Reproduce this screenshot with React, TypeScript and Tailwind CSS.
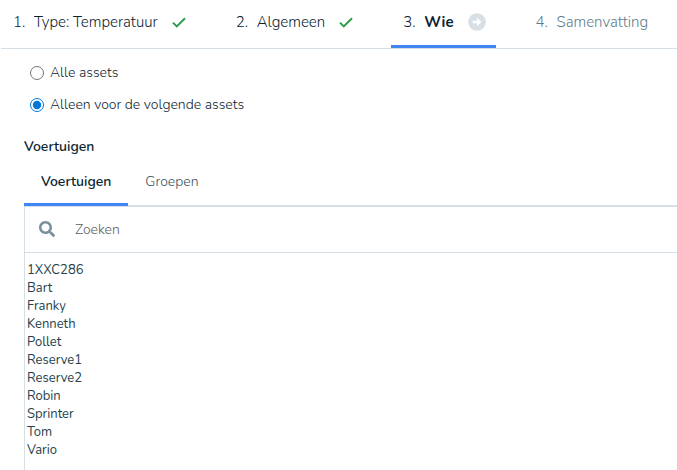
import React, { useState } from 'react';
import { clsx } from 'clsx';

const CheckIcon = () => (
  <svg viewBox="0 0 14 11" className="ml-[14px] h-[11px] w-[14px]" fill="none" aria-hidden="true">
    <path d="M1 5.6 4.8 9.4 13 1.2" stroke="#2a9d4a" strokeWidth="2" />
  </svg>
);

const CurrentIcon = () => (
  <svg viewBox="0 0 18 18" className="mb-[2px] ml-[14px] h-[18px] w-[18px]" aria-hidden="true">
    <circle cx="9" cy="9" r="8.8" fill="#d8e0e6" />
    <path d="M4.8 7.7h4.2V4.700L13.500 9l-4.500 4.300v-3H4.8z" fill="#fff" />
  </svg>
);

const SearchIcon = () => (
  <svg viewBox="0 0 512 512" className="mb-[2px] h-4 w-4" fill="#78909c" aria-hidden="true">
    <path d="M505 442.7 405.3 343c-4.500-4.500-10.600-7-17-7H372c27.600-35.300 44-79.700 44-128C416 93.100 322.900 0 208 0S0 93.100 0 208s93.100 208 208 208c48.300 0 92.700-16.400 128-44v16.300c0 6.400 2.500 12.500 7 17l99.700 99.700c9.400 9.400 24.600 9.400 33.900 0l28.300-28.300c9.400-9.400 9.400-24.600.1-34zM208 336c-70.700 0-128-57.200-128-128 0-70.700 57.200-128 128-128 70.700 0 128 57.200 128 128 0 70.700-57.200 128-128 128z" />
  </svg>
);

const steps = [
  { label: 'Type: Temperatuur', state: 'done' },
  { label: 'Algemeen', state: 'done' },
  { label: 'Wie', state: 'current' },
  { label: 'Samenvatting', state: 'todo' },
];

const scopes = [
  { value: 'all', label: 'Alle assets' },
  { value: 'selected', label: 'Alleen voor de volgende assets' },
];

const tabs = ['Voertuigen', 'Groepen'];

const vehicles = [
  '1XXC286',
  'Bart',
  'Franky',
  'Kenneth',
  'Pollet',
  'Reserve1',
  'Reserve2',
  'Robin',
  'Sprinter',
  'Tom',
  'Vario',
];

export default function App() {
  const [scope, setScope] = useState('selected');
  const [tab, setTab] = useState('Voertuigen');

  return (
    <div className="min-h-screen overflow-x-hidden bg-white font-['Nunito','Lato',sans-serif] text-sm font-light text-[#0b2430]">
      <nav className="ml-px flex h-[49px] gap-7 border-b border-[#d6dfe6]">
        {steps.map((step, index) => (
          <button
            key={step.label}
            type="button"
            aria-current={step.state === 'current' ? 'step' : undefined}
            className={clsx(
              'flex shrink-0 items-center border-b-[3px] pr-[10px] pl-3 text-[15px]',
              step.state === 'current' ? 'border-[#4285f4]' : 'border-transparent',
              step.state === 'todo' ? 'text-[#607d8b]' : 'text-[#0b2430]'
            )}
          >
            <span className="w-[21px] text-left">{index + 1}.</span>
            <span className={clsx(step.state === 'current' && 'font-bold')}>{step.label}</span>
            {step.state === 'done' && <CheckIcon />}
            {step.state === 'current' && <CurrentIcon />}
          </button>
        ))}
      </nav>

      <main className="pl-6">
        <div className="flex flex-col gap-3 pt-[14px] pl-[6px]">
          {scopes.map((item) => (
            <label key={item.value} className="flex h-5 items-center gap-[6px]">
              <input
                type="radio"
                name="scope"
                value={item.value}
                checked={scope === item.value}
                onChange={() => setScope(item.value)}
                className="h-[14px] w-[14px] accent-[#0078d7]"
              />
              {item.label}
            </label>
          ))}
        </div>

        <h2 className="mt-[22px] leading-5 font-semibold">Voertuigen</h2>

        <div role="tablist" className="flex h-[50px] border-b-2 border-[#d6dfe6]">
          {tabs.map((name) => (
            <button
              key={name}
              type="button"
              role="tab"
              aria-selected={tab === name}
              onClick={() => setTab(name)}
              className={clsx(
                '-mb-px border-b-[3px] px-[17px] pt-[3px]',
                tab === name ? 'border-[#4285f4] font-semibold' : 'border-transparent text-[#37505c]'
              )}
            >
              {name}
            </button>
          ))}
        </div>

        <div className="border-l border-[#d6dfe6]">
          <div className="flex h-[46px] items-center gap-5 border-b border-[#d6dfe6] pl-[14px]">
            <SearchIcon />
            <input
              type="text"
              aria-label="Zoeken"
              placeholder="Zoeken"
              className="h-full min-w-0 flex-1 outline-none placeholder:text-[#5c5c5c]"
            />
          </div>
          <select
            multiple
            size={11}
            aria-label="Voertuigen"
            className="block h-[217px] w-full pt-2 text-[13px] outline-none"
          >
            {vehicles.map((name) => (
              <option key={name} className="h-[18px] px-[2px] py-0 leading-[18px] font-normal text-[#263f4c]">
                {name}
              </option>
            ))}
          </select>
        </div>
      </main>
    </div>
  );
}
